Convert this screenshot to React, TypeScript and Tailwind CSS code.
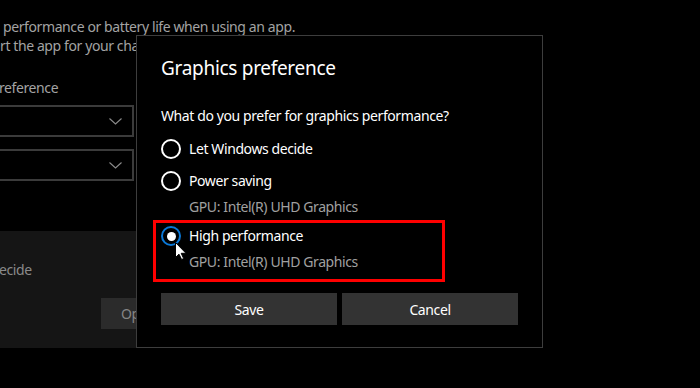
import React from "react";

const font = { fontFamily: '"Noto Sans", "Open Sans", Arial, sans-serif' };

function Chevron() {
  return (
    <svg width="13" height="7" viewBox="0 0 13 7" className="block">
      <path d="M0.5 0.5 L6.5 6 L12.5 0.5" fill="none" stroke="#8c8c8c" strokeWidth="1.1" />
    </svg>
  );
}

function Radio({ checked }: { checked?: boolean }) {
  if (checked) {
    return (
      <span className="flex h-[20px] w-[20px] shrink-0 items-center justify-center rounded-full border-[2px] border-[#0a78d7] bg-black">
        <span className="h-[9px] w-[9px] rounded-full bg-white" />
      </span>
    );
  }
  return <span className="h-[20px] w-[20px] shrink-0 rounded-full border-[2px] border-white" />;
}

function Cursor() {
  return (
    <svg width="12" height="18" viewBox="0 0 12 18" className="absolute left-[175px] top-[242px]">
      <path
        d="M0.5 0.5 L0.5 15.5 L4 12.2 L6.6 17.5 L8.7 16.6 L6.2 11.3 L11 11.3 Z"
        fill="#ffffff"
        stroke="#000000"
        strokeWidth="1"
        strokeLinejoin="round"
      />
    </svg>
  );
}

export default function App() {
  return (
    <div className="relative h-[388px] w-[700px] overflow-hidden bg-black text-[14px] tracking-[-0.4px]" style={font}>
      {/* background settings page */}
      <div className="flex flex-col text-[#a3a3a3]">
        <div className="pl-[3px] pt-[17px] leading-[19px]">performance or battery life when using an app.</div>
        <div className="leading-[19px]">rt the app for your changes to take effect.</div>
        <div className="pt-[23px] leading-[19px] -ml-[1px]">reference</div>
        <div className="mt-[8px] flex h-[32px] w-[134px] items-center justify-end border-[2px] border-l-0 border-[#3b3b3b] pr-[10px]">
          <Chevron />
        </div>
        <div className="mt-[12px] flex h-[32px] w-[134px] items-center justify-end border-[2px] border-l-0 border-[#3b3b3b] pr-[10px]">
          <Chevron />
        </div>
        <div className="mt-[50px] flex h-[117px] w-[300px] flex-col bg-[#151515]">
          <div className="pt-[29px] leading-[20px] text-[#8a8a8a] -ml-[1px]">ecide</div>
          <div className="ml-[101px] mt-[18px] flex h-[31px] w-[120px] items-center bg-[#2b2b2b] pl-[20px] text-[#858585]">
            Open
          </div>
        </div>
      </div>

      {/* dialog */}
      <div className="absolute left-[136px] top-[35px] flex h-[313px] w-[407px] flex-col border border-[#3d3d3d] bg-black px-[24px] text-white">
        <div className="pt-[17px] text-[19px] leading-[30px] tracking-[-0.3px]">Graphics preference</div>
        <div className="mt-[23px] leading-[20px]">What do you prefer for graphics performance?</div>
        <div className="mt-[7px] flex h-[32px] items-center gap-[8px]">
          <Radio />
          <span className="leading-[20px]">Let Windows decide</span>
        </div>
        <div className="flex h-[32px] items-center gap-[8px]">
          <Radio />
          <span className="leading-[20px]">Power saving</span>
        </div>
        <div className="pl-[28px] leading-[20px] text-[#a0a0a0]">GPU: Intel(R) UHD Graphics</div>
        <div className="-ml-[8px] mt-[3px] flex w-[292px] flex-col border-[3px] border-[#ff0000] pb-[7px] pl-[5px]">
          <div className="flex h-[26px] items-center gap-[8px]">
            <Radio checked />
            <span className="leading-[20px]">High performance</span>
          </div>
          <div className="mt-[3px] pl-[28px] leading-[20px] text-[#a0a0a0]">GPU: Intel(R) UHD Graphics</div>
        </div>
        <div className="mt-[11px] grid grid-cols-2 gap-[5px]">
          <button className="h-[32px] bg-[#333333] text-white">Save</button>
          <button className="h-[32px] bg-[#333333] text-white">Cancel</button>
        </div>
      </div>

      <Cursor />
    </div>
  );
}
